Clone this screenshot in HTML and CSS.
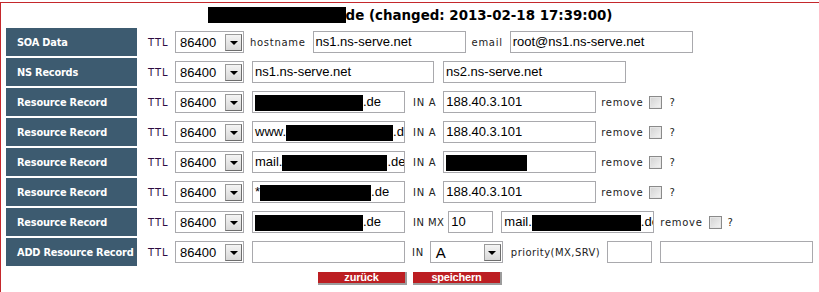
FILE: index.html
```html
<!DOCTYPE html>
<html>
<head>
<meta charset="utf-8">
<link rel="stylesheet" href="styles.css">
</head>
<body>
<div class="page">
  <div class="title"><span class="redact rt"></span>de (changed: 2013-02-18 17:39:00)</div>
  <div class="rows">
    <div class="row">
      <div class="label">SOA Data</div>
      <div class="ttl"><span class="lbl">TTL</span><span class="sel w69"><span class="sel-val">86400</span><span class="arrow"></span></span></div>
      <div class="rest">
        <span class="lbl">hostname</span>
        <span class="field w153 ml7">ns1.ns-serve.net</span>
        <span class="lbl ml6">email</span>
        <span class="field w183 ml7">root@ns1.ns-serve.net</span>
      </div>
    </div>
    <div class="row">
      <div class="label">NS Records</div>
      <div class="ttl"><span class="lbl">TTL</span><span class="sel w69"><span class="sel-val">86400</span><span class="arrow"></span></span></div>
      <div class="rest">
        <span class="field w182 ml2">ns1.ns-serve.net</span>
        <span class="field w183 ml9">ns2.ns-serve.net</span>
      </div>
    </div>
    <div class="row">
      <div class="label">Resource Record</div>
      <div class="ttl"><span class="lbl">TTL</span><span class="sel w69"><span class="sel-val">86400</span><span class="arrow"></span></span></div>
      <div class="rest">
        <span class="field w153 ml2"><span class="redact r108"></span>.de</span>
        <span class="lbl ml8">IN A</span>
        <span class="field w153 ml7">188.40.3.101</span>
        <span class="lbl ml5">remove</span>
        <input type="checkbox" class="check ml6">
        <span class="lbl ml7">?</span>
      </div>
    </div>
    <div class="row">
      <div class="label">Resource Record</div>
      <div class="ttl"><span class="lbl">TTL</span><span class="sel w69"><span class="sel-val">86400</span><span class="arrow"></span></span></div>
      <div class="rest">
        <span class="field w153 ml2">www.<span class="redact r107"></span>.de</span>
        <span class="lbl ml8">IN A</span>
        <span class="field w153 ml7">188.40.3.101</span>
        <span class="lbl ml5">remove</span>
        <input type="checkbox" class="check ml6">
        <span class="lbl ml7">?</span>
      </div>
    </div>
    <div class="row">
      <div class="label">Resource Record</div>
      <div class="ttl"><span class="lbl">TTL</span><span class="sel w69"><span class="sel-val">86400</span><span class="arrow"></span></span></div>
      <div class="rest">
        <span class="field w153 ml2">mail.<span class="redact r105"></span>.de</span>
        <span class="lbl ml8">IN A</span>
        <span class="field w153 ml7"><span class="redact r81"></span></span>
        <span class="lbl ml5">remove</span>
        <input type="checkbox" class="check ml6">
        <span class="lbl ml7">?</span>
      </div>
    </div>
    <div class="row">
      <div class="label">Resource Record</div>
      <div class="ttl"><span class="lbl">TTL</span><span class="sel w69"><span class="sel-val">86400</span><span class="arrow"></span></span></div>
      <div class="rest">
        <span class="field w153 ml2">*<span class="redact r111"></span>.de</span>
        <span class="lbl ml8">IN A</span>
        <span class="field w153 ml7">188.40.3.101</span>
        <span class="lbl ml5">remove</span>
        <input type="checkbox" class="check ml6">
        <span class="lbl ml7">?</span>
      </div>
    </div>
    <div class="row">
      <div class="label">Resource Record</div>
      <div class="ttl"><span class="lbl">TTL</span><span class="sel w69"><span class="sel-val">86400</span><span class="arrow"></span></span></div>
      <div class="rest">
        <span class="field w153 ml2"><span class="redact r108"></span>.de</span>
        <span class="lbl ml8 tight">IN MX</span>
        <span class="field w45 ml4">10</span>
        <span class="field w153 ml8">mail.<span class="redact r109"></span>.de</span>
        <span class="lbl ml6">remove</span>
        <input type="checkbox" class="check ml6">
        <span class="lbl ml6">?</span>
      </div>
    </div>
    <div class="row">
      <div class="label">ADD Resource Record</div>
      <div class="ttl"><span class="lbl">TTL</span><span class="sel w69"><span class="sel-val">86400</span><span class="arrow"></span></span></div>
      <div class="rest">
        <span class="field w153 ml2"></span>
        <span class="lbl ml7">IN</span>
        <span class="sel w73 ml6"><span class="sel-val big">A</span><span class="arrow"></span></span>
        <span class="lbl ml8 tight">priority(MX,SRV)</span>
        <span class="field w45 ml7"></span>
        <span class="field w153 ml8"></span>
      </div>
    </div>
  </div>
  <div class="buttons">
    <button class="btn">zurück</button>
    <button class="btn">speichern</button>
  </div>
</div>
</body>
</html>
```
FILE: styles.css
```css
html, body {
  margin: 0;
  padding: 0;
  background: #fff;
}
.page {
  margin-top: 2px;
  border-top: 1px solid #c4282c;
  border-left: 1px solid #c4282c;
  height: 300px;
  box-sizing: border-box;
}
.title {
  margin-top: 3px;
  height: 20px;
  line-height: 20px;
  text-align: center;
  font-family: "DejaVu Sans", Verdana, sans-serif;
  font-weight: bold;
  font-size: 13.4px;
  color: #000;
  white-space: nowrap;
}
.redact {
  display: inline-block;
  background: #000;
  height: 16px;
  vertical-align: middle;
}
.title .redact { height: 16px; vertical-align: -3px; }
.rt { width: 138px; }
.r108 { width: 108px; }
.r107 { width: 107px; }
.r105 { width: 105px; }
.r81 { width: 81px; }
.r111 { width: 111px; }
.r109 { width: 109px; }
.rows {
  margin-top: 2px;
  padding-left: 5px;
  display: flex;
  flex-direction: column;
  gap: 2px;
}
.row {
  display: flex;
  align-items: center;
  height: 28px;
}
.label {
  width: 131px;
  height: 28px;
  flex: none;
  box-sizing: border-box;
  padding-left: 11px;
  background: #3d5b70;
  color: #fff;
  font-family: "DejaVu Sans", Verdana, sans-serif;
  font-weight: bold;
  font-size: 9.8px;
  letter-spacing: -0.2px;
  display: flex;
  align-items: center;
  white-space: nowrap;
  overflow: hidden;
}
.ttl {
  width: 113px;
  flex: none;
  box-sizing: border-box;
  padding-left: 11px;
  display: grid;
  grid-template-columns: 27px 69px;
  align-items: center;
}
.lbl {
  font-family: "DejaVu Sans", Verdana, sans-serif;
  font-size: 10px;
  letter-spacing: 0.7px;
  color: #222;
  white-space: nowrap;
}
.lbl.tight { letter-spacing: 0.45px; }
.ttl .lbl { color: #2c0a40; letter-spacing: 1px; }
.rest {
  display: flex;
  align-items: center;
}
.field {
  display: block;
  box-sizing: border-box;
  height: 22px;
  border: 1px solid #a9a9ad;
  background: #fff;
  padding-left: 2px;
  font-family: "Liberation Sans", Arial, sans-serif;
  font-size: 13px;
  line-height: 20px;
  color: #000;
  white-space: nowrap;
  overflow: hidden;
  flex: none;
}
.sel {
  display: flex;
  align-items: center;
  box-sizing: border-box;
  height: 22px;
  border: 1px solid #a9a9ad;
  background: #fff;
  flex: none;
}
.sel-val {
  flex: 1;
  padding-left: 4px;
  font-family: "Liberation Sans", Arial, sans-serif;
  font-size: 13px;
  color: #000;
}
.sel-val.big { font-size: 15px; padding-left: 5px; }
.arrow {
  width: 17px;
  height: 17px;
  margin-right: 1px;
  box-sizing: border-box;
  border: 1px solid #9a9a9a;
  border-right-color: #6e6e6e;
  border-bottom-color: #6e6e6e;
  background: linear-gradient(#f4f4f4, #d8d8d8);
  display: flex;
  align-items: center;
  justify-content: center;
}
.arrow::after {
  content: "";
  width: 0;
  height: 0;
  border-left: 4px solid transparent;
  border-right: 4px solid transparent;
  border-top: 4px solid #000;
  margin-top: 1px;
}
.check {
  -webkit-appearance: none;
  appearance: none;
  width: 13px;
  height: 13px;
  margin-top: 0;
  margin-bottom: 0;
  margin-right: 0;
  box-sizing: border-box;
  border: 1px solid #8a8a8a;
  background: linear-gradient(135deg, #d2d2d2, #f4f4f4);
  box-shadow: inset 0 0 0 1px #e6e6e6;
  flex: none;
}
.w45 { width: 45px; }
.w69 { width: 69px; }
.w73 { width: 73px; }
.w153 { width: 153px; }
.w182 { width: 182px; }
.w183 { width: 183px; }
.ml2 { margin-left: 2px; }
.ml4 { margin-left: 4px; }
.ml5 { margin-left: 5px; }
.ml6 { margin-left: 6px; }
.ml7 { margin-left: 7px; }
.ml8 { margin-left: 8px; }
.ml9 { margin-left: 9px; }
.buttons {
  margin-top: 6px;
  display: flex;
  justify-content: center;
  gap: 6px;
}
.btn {
  width: 89px;
  height: 13px;
  padding: 0 0 1px 0;
  margin: 0;
  box-sizing: border-box;
  border: none;
  border-right: 2px solid #9c9c9c;
  border-bottom: 2px solid #9c9c9c;
  background: #bc1e22;
  color: #fff;
  font-family: "Liberation Sans", Arial, sans-serif;
  font-weight: bold;
  font-size: 11px;
  line-height: 11px;
  letter-spacing: -0.2px;
}
```
